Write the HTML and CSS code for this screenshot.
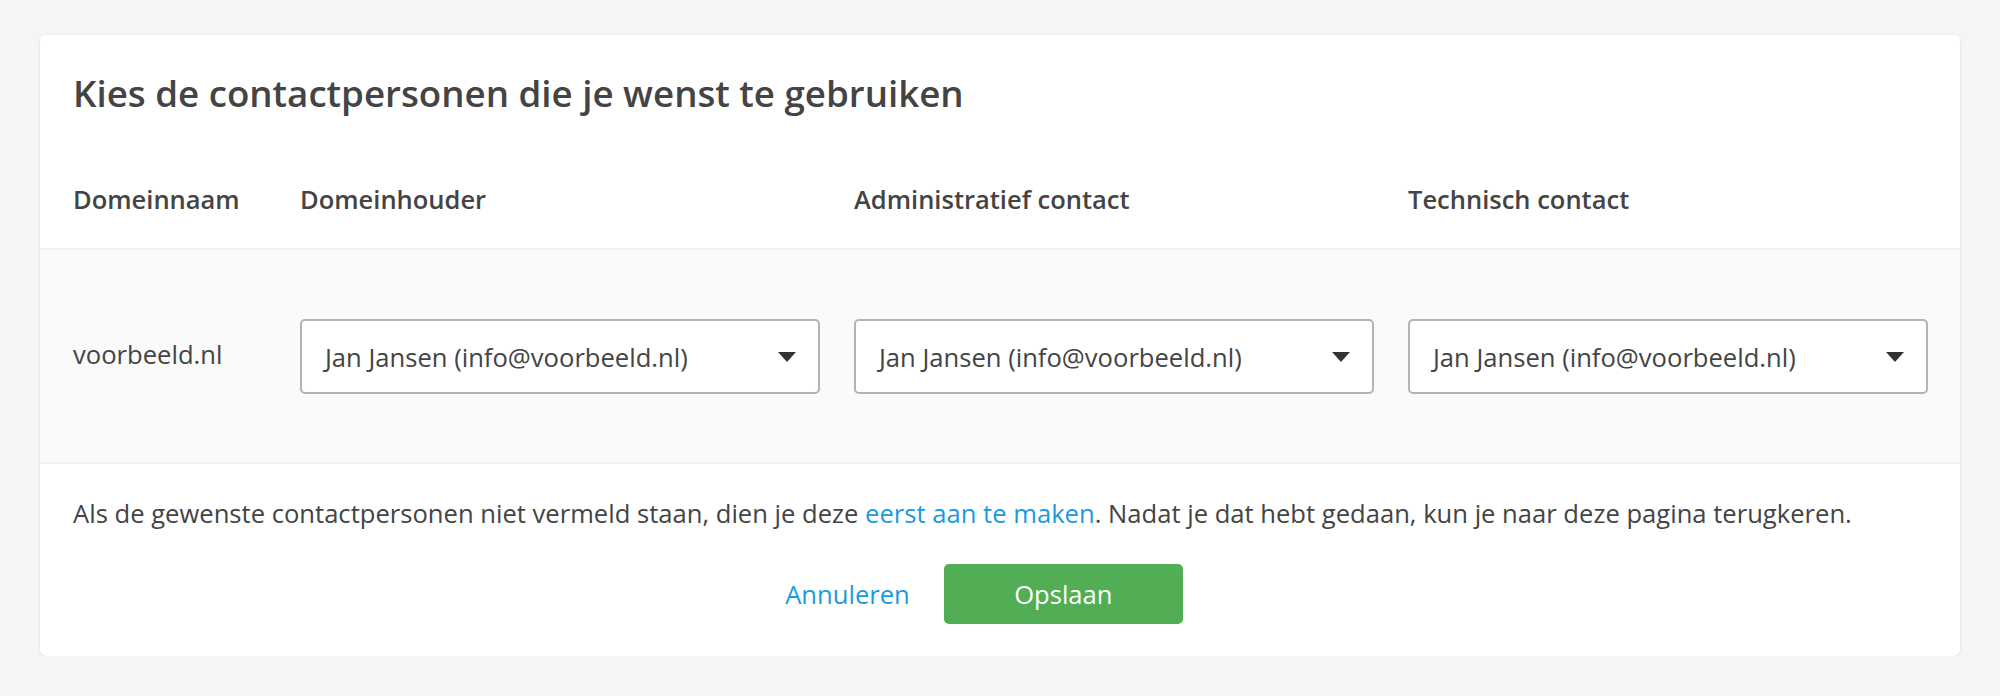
FILE: index.html
```html
<!DOCTYPE html>
<html lang="nl">

<head>
  <meta charset="UTF-8">
  <meta name="viewport" content="width=device-width, initial-scale=1.0">
  <title>Contactpersonen</title>
  <link rel="stylesheet" href="styles.css">
</head>

<body>
  <div class="card">
    <h1 class="title">Kies de contactpersonen die je wenst te gebruiken</h1>

    <div class="row head">
      <div>Domeinnaam</div>
      <div>Domeinhouder</div>
      <div>Administratief contact</div>
      <div>Technisch contact</div>
    </div>

    <div class="row body">
      <div class="domain">voorbeeld.nl</div>
      <div class="select">
        <span>Jan Jansen (info@voorbeeld.nl)</span>
        <i class="caret"></i>
      </div>
      <div class="select">
        <span>Jan Jansen (info@voorbeeld.nl)</span>
        <i class="caret"></i>
      </div>
      <div class="select">
        <span>Jan Jansen (info@voorbeeld.nl)</span>
        <i class="caret"></i>
      </div>
    </div>

    <div class="foot">
      <p class="note">Als de gewenste contactpersonen niet vermeld staan, dien je deze <a href="#">eerst aan te maken</a>. Nadat je dat hebt gedaan, kun je naar deze pagina terugkeren.</p>
      <div class="actions">
        <a href="#" class="cancel">Annuleren</a>
        <button class="save">Opslaan</button>
      </div>
    </div>
  </div>
</body>

</html>
```

FILE: styles.css
```css
body {
  margin: 0;
  background-color: #f5f5f5;
  font-family: "Open Sans", "Liberation Sans", sans-serif;
  color: #444;
}

.card {
  margin: 35px 40px 0;
  background-color: #fff;
  border-radius: 6px;
  box-shadow: 0 1px 3px rgba(0, 0, 0, .12);
  overflow: hidden;
}

.title {
  margin: 0;
  padding: 35px 33px 0;
  font-size: 36.7px;
  font-weight: 600;
  line-height: 46px;
}

/* kolommen: domein + 3 keuzelijsten */
.row {
  display: grid;
  grid-template-columns: 193px repeat(3, 1fr);
  column-gap: 34px;
  padding: 0 32px 0 33px;
}

.head {
  margin-top: 63px;
  padding-bottom: 29px;
  border-bottom: 2px solid #efefef;
  font-size: 25.5px;
  font-weight: 600;
  line-height: 40px;
}

.body {
  align-items: center;
  padding-top: 69px;
  padding-bottom: 68px;
  background-color: #fafafa;
  border-bottom: 2px solid #efefef;
}

.domain {
  font-size: 25.6px;
  line-height: 40px;
  margin-top: -4px;
}

.select {
  display: flex;
  align-items: center;
  justify-content: space-between;
  height: 75px;
  box-sizing: border-box;
  padding: 0 22px 0 23px;
  background-color: #fff;
  border: 2px solid #b3b3b3;
  border-radius: 5px;
  font-size: 25.6px;
}

.select span {
  padding-top: 2px;
}

.caret {
  width: 0;
  height: 0;
  border-left: 9px solid transparent;
  border-right: 9px solid transparent;
  border-top: 10px solid #333;
}

.foot {
  padding: 30px 33px 32px;
}

.note {
  margin: 0;
  font-size: 25.6px;
  line-height: 40px;
}

.note a,
.cancel {
  color: #1a9bdc;
  text-decoration: none;
}

.actions {
  display: flex;
  justify-content: center;
  align-items: center;
  gap: 34px;
  margin-top: 30px;
  padding-right: 32px;
}

.cancel {
  font-size: 25.6px;
}

.save {
  width: 239px;
  height: 60px;
  border: 0;
  border-radius: 5px;
  background-color: #51ae55;
  color: #fff;
  font-family: inherit;
  font-size: 25.6px;
  cursor: pointer;
}
```
